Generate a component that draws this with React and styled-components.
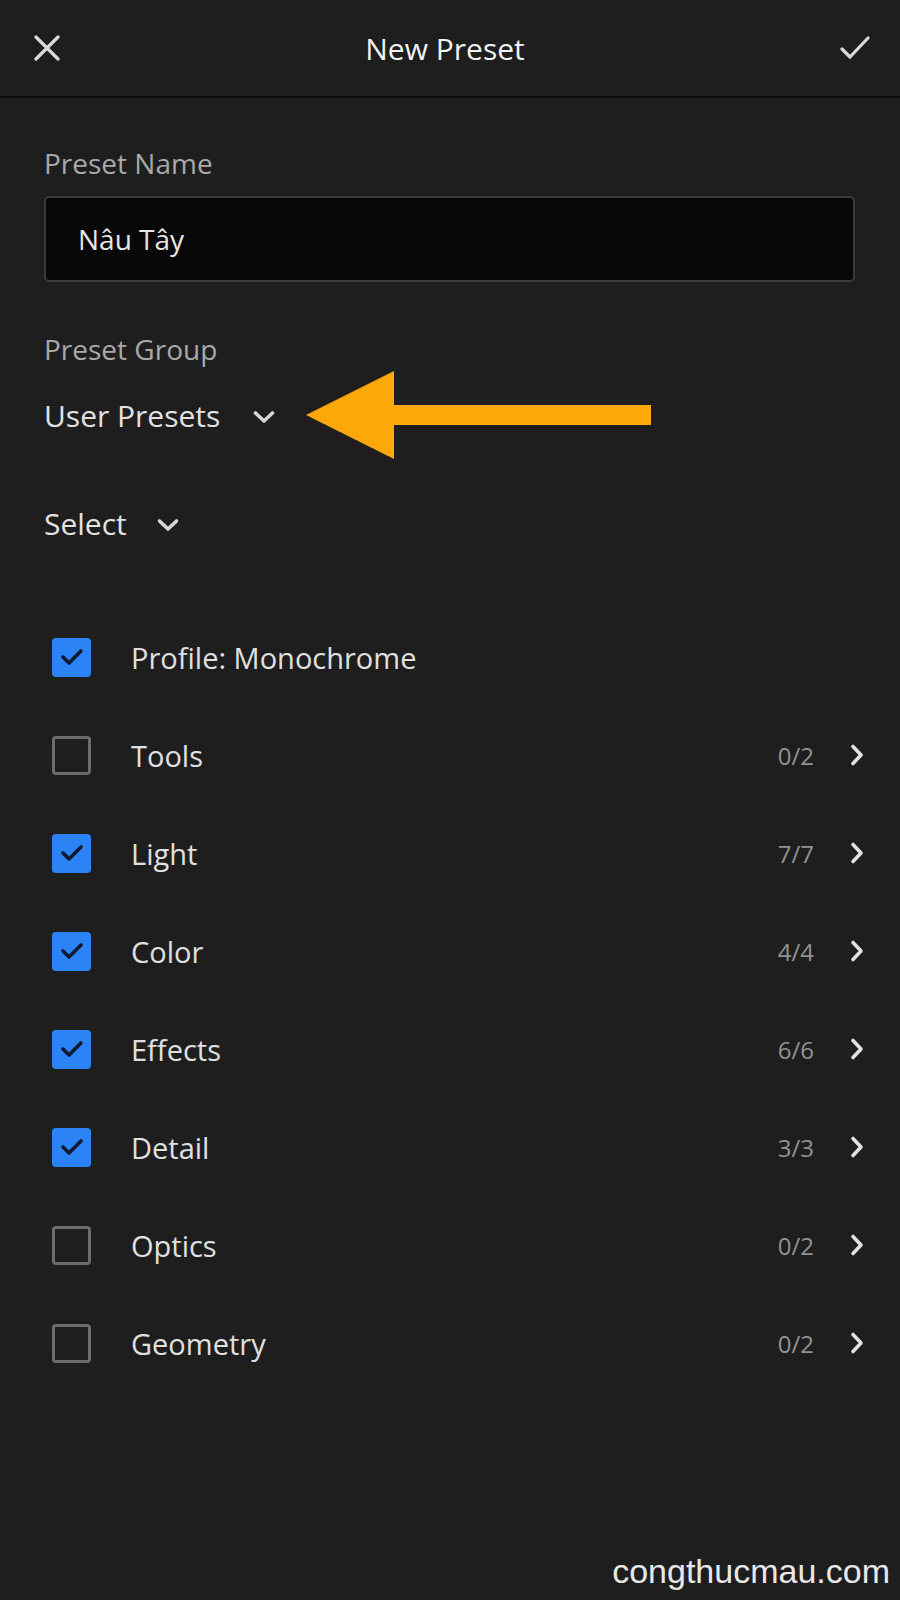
import React from "react";
import styled, { createGlobalStyle } from "styled-components";

const GlobalStyle = createGlobalStyle`
  html, body {
    margin: 0;
    padding: 0;
    background: #1e1e1e;
  }
  #root {
    min-height: 1600px;
  }
`;

const items = [
  { label: "Profile: Monochrome", checked: true },
  { label: "Tools", checked: false, count: "0/2" },
  { label: "Light", checked: true, count: "7/7" },
  { label: "Color", checked: true, count: "4/4" },
  { label: "Effects", checked: true, count: "6/6" },
  { label: "Detail", checked: true, count: "3/3" },
  { label: "Optics", checked: false, count: "0/2" },
  { label: "Geometry", checked: false, count: "0/2" },
];

function ChevronDown() {
  return (
    <svg width="24" height="14" viewBox="0 0 24 14">
      <path d="M3.5 3 L12 11 L20.5 3" fill="none" stroke="#d6d6d6" strokeWidth="3.6" strokeLinecap="round" strokeLinejoin="round" />
    </svg>
  );
}

function ChevronRight() {
  return (
    <svg width="14" height="24" viewBox="0 0 14 24">
      <path d="M3 3.5 L11 12 L3 20.5" fill="none" stroke="#e2e2e2" strokeWidth="3.6" strokeLinecap="round" strokeLinejoin="round" />
    </svg>
  );
}

function Arrow() {
  return (
    <svg width="345" height="88" viewBox="0 0 345 88">
      <polygon points="0,44 88,0 88,88" fill="#ffa80a" />
      <rect x="86" y="34" width="259" height="20" fill="#ffa80a" />
    </svg>
  );
}

export default function App() {
  return (
    <>
      <GlobalStyle />
      <Page>
        <Header>
          <IconButton>
            <svg width="26" height="26" viewBox="0 0 26 26">
              <path d="M2 2 L24 24 M24 2 L2 24" stroke="#dadada" strokeWidth="3.2" strokeLinecap="round" />
            </svg>
          </IconButton>
          <Title>New Preset</Title>
          <IconButton>
            <svg width="30" height="24" viewBox="0 0 30 24">
              <path d="M2 13 L10 21 L28 2" fill="none" stroke="#dadada" strokeWidth="3.2" strokeLinecap="round" strokeLinejoin="round" />
            </svg>
          </IconButton>
        </Header>

        <Form>
          <FieldLabel>Preset Name</FieldLabel>
          <NameInput>Nâu Tây</NameInput>

          <FieldLabel $top={49}>Preset Group</FieldLabel>
          <Dropdown $top={28} $gap={32}>
            <span>User Presets</span>
            <ChevronDown />
            <Annotation>
              <Arrow />
            </Annotation>
          </Dropdown>

          <Dropdown $top={68} $gap={29}>
            <span>Select</span>
            <ChevronDown />
          </Dropdown>
        </Form>

        <List>
          {items.map((item) => (
            <Row key={item.label}>
              <Checkbox $checked={item.checked}>
                {item.checked && (
                  <svg width="26" height="20" viewBox="0 0 26 20">
                    <path d="M4 10 L10 16 L22 4" fill="none" stroke="#101a30" strokeWidth="3.6" strokeLinecap="round" strokeLinejoin="round" />
                  </svg>
                )}
              </Checkbox>
              <RowLabel>{item.label}</RowLabel>
              {item.count && (
                <>
                  <Count>{item.count}</Count>
                  <ChevronRight />
                </>
              )}
            </Row>
          ))}
        </List>

        <Watermark>congthucmau.com</Watermark>
      </Page>
    </>
  );
}

const Page = styled.div`
  min-height: 1600px;
  display: flex;
  flex-direction: column;
  background: #1e1e1e;
  font-family: "Open Sans", "Noto Sans", sans-serif;
  color: #e4e4e4;
`;

const Header = styled.div`
  height: 96px;
  display: grid;
  grid-template-columns: 60px 1fr 60px;
  align-items: center;
  padding: 0 30px 0 34px;
  border-bottom: 2px solid #0b0b0b;
`;

const IconButton = styled.div`
  display: flex;
  align-items: center;
  justify-content: center;
  &:first-child {
    justify-content: flex-start;
  }
  &:last-child {
    justify-content: flex-end;
  }
`;

const Title = styled.div`
  text-align: center;
  font-size: 30px;
  color: #f2f2f2;
  padding-right: 14px;
`;

const Form = styled.div`
  display: flex;
  flex-direction: column;
  align-items: flex-start;
  padding: 47px 45px 0 44px;
`;

const FieldLabel = styled.div`
  font-size: 28px;
  line-height: 36px;
  color: #a9a9a9;
  margin-top: ${(p) => p.$top || 0}px;
`;

const NameInput = styled.div`
  box-sizing: border-box;
  align-self: stretch;
  height: 86px;
  margin-top: 15px;
  padding: 0 32px;
  display: flex;
  align-items: center;
  background: #080808;
  border: 2px solid #3b3b3b;
  border-radius: 5px;
  font-size: 28px;
  color: #e6e6e6;
`;

const Dropdown = styled.div`
  position: relative;
  display: flex;
  align-items: center;
  gap: ${(p) => p.$gap || 30}px;
  height: 40px;
  margin-top: ${(p) => p.$top || 0}px;
  font-size: 30px;
  color: #e2e2e2;
  svg {
    margin-top: 3px;
  }
`;

const Annotation = styled.div`
  position: absolute;
  left: 262px;
  top: -24px;
  svg {
    margin: 0;
    display: block;
  }
`;

const List = styled.div`
  display: flex;
  flex-direction: column;
  padding: 65px 36px 0 52px;
`;

const Row = styled.div`
  height: 98px;
  display: flex;
  align-items: center;
`;

const Checkbox = styled.div`
  box-sizing: border-box;
  width: 39px;
  height: 39px;
  border-radius: 4px;
  display: flex;
  align-items: center;
  justify-content: center;
  background: ${(p) => (p.$checked ? "#2b83f6" : "transparent")};
  border: ${(p) => (p.$checked ? "none" : "3px solid #6c6c6c")};
`;

const RowLabel = styled.div`
  flex: 1;
  margin-left: 40px;
  font-size: 29px;
  color: #e0e0e0;
`;

const Count = styled.div`
  font-size: 24px;
  color: #929292;
  margin-right: 36px;
`;

const Watermark = styled.div`
  margin-top: auto;
  align-self: flex-end;
  padding: 0 10px 9px 0;
  font-family: "Liberation Sans", Arial, sans-serif;
  font-size: 34px;
  line-height: 40px;
  color: #e8e8e8;
`;
